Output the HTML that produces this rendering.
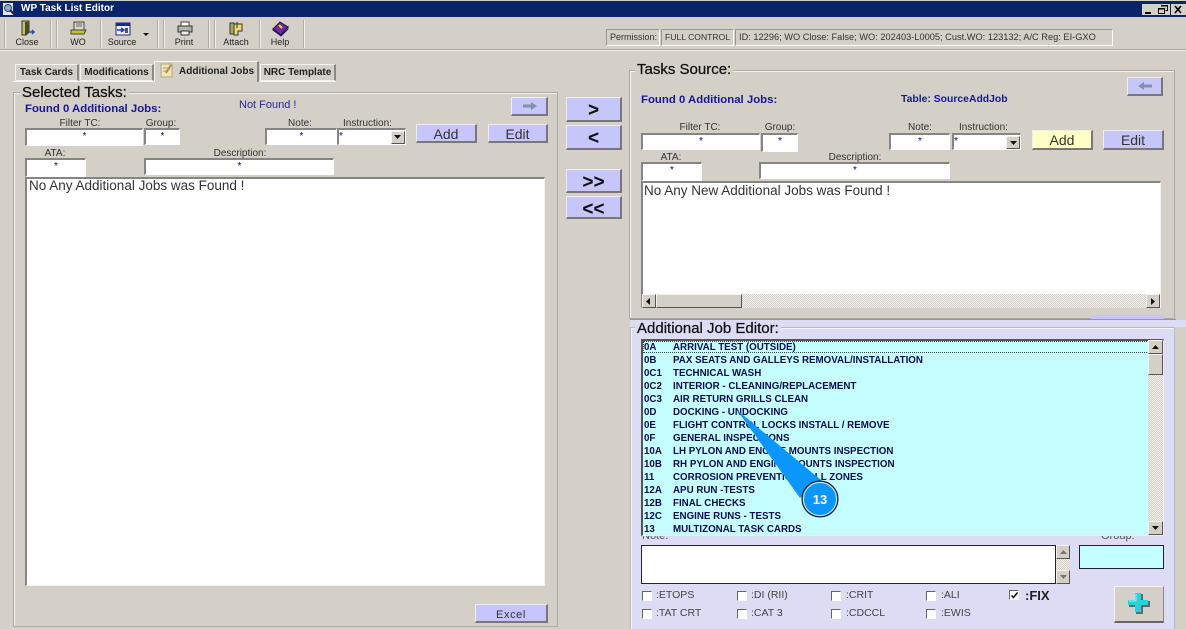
<!DOCTYPE html>
<html><head><meta charset="utf-8"><style>
html,body{margin:0;padding:0}
body{width:1186px;height:629px;overflow:hidden;background:#d4d0c8;position:relative;font-family:"Liberation Sans",sans-serif;color:#222}
div,span,svg{position:absolute;box-sizing:border-box}
.t{white-space:nowrap;line-height:1}
.c{text-align:center}
.inp{background:#fff;border:1px solid #fff;border-top:2px solid #858585;border-left:2px solid #858585;color:#006;font-size:10px;text-align:center;line-height:14px}
.btn{background:#c6c6fa;border:1px solid #eee;border-right:2px solid #777;border-bottom:2px solid #777;text-align:center;color:#333;font-size:14px;line-height:18px;font-weight:normal}
.big{font-weight:bold;font-size:19px;line-height:25px;color:#111}
.grp{border:1px solid #aaa9a3;box-shadow:inset 1px 1px 0 #f4f3ef}
.leg{background:#d4d0c8;font-size:15px;color:#111;padding:0 2px;line-height:14px;white-space:nowrap;-webkit-text-stroke:.25px #111}
.tb{font-size:9px;color:#222;text-align:center;white-space:nowrap;line-height:10px}
.sep{width:2px;top:20px;height:28px;border-left:1px solid #b0ada5;border-right:1px solid #f0efeb}
.tab{background:#d4d0c8;border:1px solid #f5f4f0;border-right:2px solid #888;font-size:10px;font-weight:bold;color:#222;text-align:center;white-space:nowrap}
.lb{font-size:10px;color:#333;white-space:nowrap;line-height:10px}
.bl{font-size:11.4px;font-weight:bold;color:#16169a;white-space:nowrap;line-height:11px}
.row{left:644px;top:0;font-size:9.77px;font-weight:bold;color:#0c0c50;white-space:nowrap;line-height:13px;height:13px}
.row b{position:absolute;left:29px;top:0;font-weight:bold}
.cb{width:10px;height:10px;background:#fff;border:1px solid #fff;border-top:1px solid #666;border-left:1px solid #666}
.cl{font-size:10.5px;color:#444;white-space:nowrap;line-height:11px}
.dith{background:repeating-conic-gradient(#d4d0c8 0 25%,#f0efeb 0 50%) 0 0/2px 2px}
.sb{background:#d4d0c8;border:1px solid #f4f3ef;border-right:1px solid #555;border-bottom:1px solid #555}
.st{border:1px solid #fff;border-top-color:#999;border-left-color:#999;line-height:15px;padding-left:3px;color:#333;top:29px;height:17px;white-space:nowrap}
.wb{top:4px;height:11px;width:14px;background:#d4d0c8}
</style></head><body>

<!-- title bar -->
<div style="left:0;top:1px;width:1186px;height:16px;background:#0a246a"></div>
<svg style="left:2px;top:2px" width="14" height="14" viewBox="0 0 14 14"><path d="M1 1h10v12H1z" fill="#e4e8ee"/><circle cx="6" cy="6" r="3.500" fill="#7fb0d8" stroke="#345"/><path d="M8 8l5 5" stroke="#224" stroke-width="2"/></svg>
<div class="t" style="left:21px;top:4px;font-size:10px;font-weight:bold;color:#fff">WP Task List Editor</div>
<div class="wb" style="left:1142px"></div>
<svg style="left:1142px;top:4px" width="14" height="11"><path d="M3 8h6v2H3z" fill="#000"/></svg>
<div class="wb" style="left:1156px"></div>
<svg style="left:1156px;top:4px" width="14" height="11"><path d="M5.500 1.500h6v5h-2M2.500 4.500h6v5h-6z" fill="none" stroke="#000"/><path d="M5 1h7v1.500H5zM2 4h7v1.500H2z" fill="#000"/></svg>
<div class="wb" style="left:1171px;width:15px"></div>
<svg style="left:1171px;top:4px" width="15" height="11"><path d="M4 2l6 7M10 2l-6 7" stroke="#000" stroke-width="1.700"/></svg>

<!-- toolbar -->
<div style="left:0;top:49px;width:1186px;height:2px;border-top:1px solid #a8a59d;border-bottom:1px solid #f0efeb"></div>
<div class="sep" style="left:4px"></div>
<div class="sep" style="left:50px"></div><div class="sep" style="left:56px"></div>
<div class="sep" style="left:100px"></div>
<div class="sep" style="left:157px"></div><div class="sep" style="left:163px"></div>
<div class="sep" style="left:208px"></div><div class="sep" style="left:214px"></div>
<div class="sep" style="left:259px"></div><div class="sep" style="left:303px"></div>

<svg style="left:20px;top:20px" width="16" height="17" viewBox="0 0 16 17"><path d="M2 1h7v11l-3 3H2z" fill="#c8c060" stroke="#333"/><path d="M5 2h4v10l-4 3z" fill="#4a4a24"/><path d="M9 12h5m-2-2 2 2-2 2" stroke="#2a4cb0" fill="none" stroke-width="1.500"/></svg>
<svg style="left:70px;top:21px" width="17" height="15" viewBox="0 0 17 15"><path d="M4 1h10v8H4z" fill="#d8d8d0" stroke="#444"/><path d="M6 3h6M6 5h6" stroke="#666"/><path d="M1 9h15l-2 4H1z" fill="#c8c030" stroke="#444"/></svg>
<svg style="left:115px;top:22px" width="16" height="14" viewBox="0 0 16 14"><path d="M1 1h14v12H1z" fill="#eef1f8" stroke="#1a2a80"/><path d="M1 1h14v3H1z" fill="#1a2a80"/><path d="M2 8h6m-2-2 3 2-3 2" stroke="#1838c0" fill="none" stroke-width="1.500"/><path d="M10 6h3v5h-3z" fill="#555"/></svg>
<svg style="left:143px;top:33px" width="6" height="3" viewBox="0 0 6 3"><path d="M0 0h6L3 3z" fill="#111"/></svg>
<svg style="left:177px;top:21px" width="16" height="15" viewBox="0 0 16 15"><path d="M4 1h8v4H4z" fill="#fff" stroke="#444"/><path d="M1 5h14v6H1z" fill="#b4b4b0" stroke="#333"/><path d="M4 10h8v4H4z" fill="#eee" stroke="#333"/></svg>
<svg style="left:229px;top:21px" width="14" height="16" viewBox="0 0 14 16"><path d="M1 2h4v11H1z" fill="#a8a860" stroke="#333"/><path d="M5 3h8v7H9v4H5z" fill="#e8dc70" stroke="#333"/><path d="M8 1v6" stroke="#333"/></svg>
<svg style="left:272px;top:21px" width="17" height="16" viewBox="0 0 17 16"><path d="M8 1l8 5-7 8-8-6z" fill="#6a2aa0" stroke="#2a1050"/><path d="M1 8l8 6 7-8v2l-7 7-8-6z" fill="#d8d8e8" stroke="#2a1050"/><path d="M7 4l3 3" stroke="#f4d040" stroke-width="2"/></svg>

<div class="tb" style="left:12px;top:37px;width:30px">Close</div>
<div class="tb" style="left:63px;top:37px;width:30px">WO</div>
<div class="tb" style="left:107px;top:37px;width:30px">Source</div>
<div class="tb" style="left:169px;top:37px;width:30px">Print</div>
<div class="tb" style="left:221px;top:37px;width:30px">Attach</div>
<div class="tb" style="left:265px;top:37px;width:30px">Help</div>

<!-- status -->
<div class="st" style="left:606px;width:54px;font-size:9px">Permission:</div>
<div class="st" style="left:661px;width:73px;font-size:8.600px">FULL CONTROL</div>
<div class="st" style="left:735px;width:378px;font-size:9.250px">ID: 12296; WO Close: False; WO: 202403-L0005; Cust.WO: 123132; A/C Reg: EI-GXO</div>

<!-- tabs -->
<div style="left:13px;top:81px;width:323px;height:1px;background:#f5f4f0"></div>
<div class="tab" style="left:15px;top:64px;width:64px;height:17px;line-height:16px">Task Cards</div>
<div class="tab" style="left:80px;top:64px;width:74px;height:17px;line-height:16px">Modifications</div>
<div class="tab" style="left:154px;top:61px;width:105px;height:21px;line-height:20px;border-bottom:0;text-align:left;padding-left:24px">Additional Jobs</div>
<svg style="left:160px;top:63px" width="14" height="15" viewBox="0 0 14 15"><path d="M1 1h11v13H1z" fill="#f0e4b8" stroke="#b0a880"/><path d="M3 5h5M3 8h4" stroke="#999"/><path d="M11 2 6 10" stroke="#b88a30" stroke-width="2"/></svg>
<div class="tab" style="left:260px;top:64px;width:76px;height:17px;line-height:16px">NRC Template</div>

<!-- Selected Tasks -->
<div class="grp" style="left:13px;top:92px;width:545px;height:535px"></div>
<div class="leg" style="left:20px;top:86px">Selected Tasks:</div>
<div class="bl" style="left:25px;top:104px">Found 0 Additional Jobs:</div>
<div class="t" style="left:239px;top:100px;font-size:11px;color:#28289a">Not Found !</div>
<div class="btn" style="left:511px;top:97px;width:37px;height:19px"></div>
<svg style="left:522px;top:101px" width="16" height="10" viewBox="0 0 16 10"><path d="M1 3.500h8V1l6 4-6 4V6.500H1z" fill="#7f93a8"/></svg>

<div class="lb c" style="left:40px;top:119px;width:80px">Filter TC:</div>
<div class="lb c" style="left:136px;top:119px;width:50px">Group:</div>
<div class="lb c" style="left:265px;top:119px;width:70px">Note:</div>
<div class="lb" style="left:343px;top:119px">Instruction:</div>
<div class="inp" style="left:25px;top:128px;width:118px;height:18px">*</div>
<div class="inp" style="left:144px;top:128px;width:36px;height:17px">*</div>
<div class="inp" style="left:265px;top:128px;width:72px;height:17px">*</div>
<div class="inp" style="left:337px;top:128px;width:69px;height:17px;text-align:left">*</div>
<div class="sb" style="left:391px;top:131px;width:14px;height:13px"></div>
<svg style="left:394px;top:135px" width="7" height="4"><path d="M0 0h7L3.500 4z" fill="#111"/></svg>
<div class="btn" style="left:416px;top:124px;width:61px;height:19px">Add</div>
<div class="btn" style="left:488px;top:124px;width:60px;height:19px">Edit</div>

<div class="lb c" style="left:25px;top:149px;width:60px">ATA:</div>
<div class="lb c" style="left:190px;top:149px;width:100px">Description:</div>
<div class="inp" style="left:25px;top:158px;width:61px;height:19px">*</div>
<div class="inp" style="left:144px;top:158px;width:190px;height:17px">*</div>
<div style="left:25px;top:177px;width:520px;height:409px;background:#fff;border-top:2px solid #858585;border-left:2px solid #858585;border-right:1px solid #f4f3ef;border-bottom:1px solid #f4f3ef"></div>
<div class="t" style="left:29px;top:179px;font-size:13.500px;color:#333">No Any Additional Jobs was Found !</div>
<div class="btn" style="left:475px;top:604px;width:73px;height:19px;font-size:11px;letter-spacing:.6px;line-height:20px">Excel</div>

<!-- middle -->
<div class="btn big" style="left:566px;top:97px;width:56px;height:25px">&gt;</div>
<div class="btn big" style="left:566px;top:125px;width:56px;height:25px">&lt;</div>
<div class="btn big" style="left:566px;top:169px;width:56px;height:24px">&gt;&gt;</div>
<div class="btn big" style="left:566px;top:196px;width:56px;height:23px">&lt;&lt;</div>

<!-- Tasks Source -->
<div class="grp" style="left:629px;top:70px;width:546px;height:249px"></div>
<div class="leg" style="left:635px;top:63px">Tasks Source:</div>
<div class="bl" style="left:641px;top:95px">Found 0 Additional Jobs:</div>
<div class="t" style="left:901px;top:95px;font-size:10.400px;font-weight:bold;color:#16169a">Table: SourceAddJob</div>
<div class="btn" style="left:1127px;top:77px;width:36px;height:19px"></div>
<svg style="left:1137px;top:81px" width="16" height="10" viewBox="0 0 16 10"><path d="M15 3.500H7V1L1 5l6 4V6.500h8z" fill="#7f93a8"/></svg>

<div class="lb c" style="left:660px;top:123px;width:80px">Filter TC:</div>
<div class="lb c" style="left:755px;top:123px;width:50px">Group:</div>
<div class="lb c" style="left:885px;top:123px;width:70px">Note:</div>
<div class="lb" style="left:959px;top:123px">Instruction:</div>
<div class="inp" style="left:641px;top:133px;width:119px;height:17px">*</div>
<div class="inp" style="left:761px;top:133px;width:37px;height:19px">*</div>
<div class="inp" style="left:889px;top:133px;width:61px;height:17px">*</div>
<div class="inp" style="left:952px;top:133px;width:69px;height:17px;text-align:left">*</div>
<div class="sb" style="left:1006px;top:136px;width:14px;height:13px"></div>
<svg style="left:1010px;top:141px" width="7" height="4"><path d="M0 0h7L3.500 4z" fill="#111"/></svg>
<div class="btn" style="left:1032px;top:130px;width:61px;height:20px;background:#ffffc6">Add</div>
<div class="btn" style="left:1103px;top:130px;width:61px;height:20px">Edit</div>
<div class="lb c" style="left:641px;top:153px;width:60px">ATA:</div>
<div class="lb c" style="left:805px;top:153px;width:100px">Description:</div>
<div class="inp" style="left:641px;top:162px;width:61px;height:19px">*</div>
<div class="inp" style="left:759px;top:162px;width:191px;height:17px">*</div>
<div style="left:641px;top:181px;width:520px;height:127px;background:#fff;border-top:2px solid #858585;border-left:2px solid #858585;border-right:1px solid #f4f3ef;border-bottom:1px solid #f4f3ef"></div>
<div class="t" style="left:644px;top:184px;font-size:13.500px;color:#333">No Any New Additional Jobs was Found !</div>
<div class="dith" style="left:643px;top:294px;width:517px;height:14px"></div>
<div class="sb" style="left:642px;top:294px;width:14px;height:14px"></div>
<svg style="left:646px;top:298px" width="4" height="7"><path d="M4 0v7L0 3.500z" fill="#111"/></svg>
<div class="sb" style="left:656px;top:294px;width:86px;height:14px"></div>
<div class="sb" style="left:1146px;top:294px;width:14px;height:14px"></div>
<svg style="left:1151px;top:298px" width="4" height="7"><path d="M0 0v7l4-3.500z" fill="#111"/></svg>
<div style="left:1091px;top:315px;width:73px;height:5px;background:#c6c6fa"></div>

<!-- Additional Job Editor -->
<div style="left:630px;top:320px;width:545px;height:309px;background:#dcdcf4"></div>
<div style="left:630px;top:320px;width:556px;height:7px;background:#dcdcf4"></div>
<div style="left:630px;top:319px;width:546px;height:1px;background:#99968e"></div>
<div style="left:630px;top:327px;width:545px;height:302px;border:1px solid #b6b6cc;border-bottom:0;box-shadow:inset 1px 1px 0 #f6f6fc"></div>
<div class="leg" style="left:635px;top:322px;background:#dcdcf4">Additional Job Editor:</div>
<div style="left:641px;top:339px;width:523px;height:197px;background:#c4feff;border-top:2px solid #555;border-left:2px solid #555;border-right:1px solid #eee;border-bottom:1px solid #eee"></div>
<div style="left:643px;top:341px;width:506px;height:12px;border:1px dotted #444"></div>
<div style="left:643px;top:341px;width:505px;height:194px;overflow:hidden">
<div style="left:-643px;top:-341px;width:1186px;height:629px">
<div class="row" style="top:341px">0A<b>ARRIVAL TEST (OUTSIDE)</b></div>
<div class="row" style="top:354px">0B<b>PAX SEATS AND GALLEYS REMOVAL/INSTALLATION</b></div>
<div class="row" style="top:367px">0C1<b>TECHNICAL WASH</b></div>
<div class="row" style="top:380px">0C2<b>INTERIOR - CLEANING/REPLACEMENT</b></div>
<div class="row" style="top:393px">0C3<b>AIR RETURN GRILLS CLEAN</b></div>
<div class="row" style="top:406px">0D<b>DOCKING - UNDOCKING</b></div>
<div class="row" style="top:419px">0E<b>FLIGHT CONTROL LOCKS INSTALL / REMOVE</b></div>
<div class="row" style="top:432px">0F<b>GENERAL INSPECTIONS</b></div>
<div class="row" style="top:445px">10A<b>LH PYLON AND ENGINE MOUNTS INSPECTION</b></div>
<div class="row" style="top:458px">10B<b>RH PYLON AND ENGINE MOUNTS INSPECTION</b></div>
<div class="row" style="top:471px">11<b>CORROSION PREVENTION - ALL ZONES</b></div>
<div class="row" style="top:484px">12A<b>APU RUN -TESTS</b></div>
<div class="row" style="top:497px">12B<b>FINAL CHECKS</b></div>
<div class="row" style="top:510px">12C<b>ENGINE RUNS - TESTS</b></div>
<div class="row" style="top:523px">13<b>MULTIZONAL TASK CARDS</b></div>
</div></div>
<div class="dith" style="left:1148px;top:340px;width:15px;height:195px"></div>
<div class="sb" style="left:1148px;top:340px;width:15px;height:14px"></div>
<svg style="left:1152px;top:345px" width="7" height="4"><path d="M0 4h7L3.500 0z" fill="#111"/></svg>
<div class="sb" style="left:1148px;top:354px;width:15px;height:21px"></div>
<div class="sb" style="left:1148px;top:521px;width:15px;height:14px"></div>
<svg style="left:1152px;top:526px" width="7" height="4"><path d="M0 0h7L3.500 4z" fill="#111"/></svg>

<!-- callout -->
<svg style="left:730px;top:405px" width="120" height="120" viewBox="0 0 120 120"><path d="M7 5 92 76 70 93z" fill="#0b96fb"/><circle cx="90" cy="94" r="18" fill="#0b96fb" stroke="#111" stroke-width="1"/><circle cx="90" cy="94" r="16.500" fill="none" stroke="#e8e8e8" stroke-width="1"/><text x="90" y="99" font-family="Liberation Sans" font-size="13" font-weight="bold" fill="#fff" text-anchor="middle">13</text></svg>

<!-- Note/Group -->
<div style="left:642px;top:536px;height:6px;width:60px;overflow:hidden"><span class="t" style="left:0;top:-5px;font-size:11px;color:#555">Note:</span></div>
<div style="left:1101px;top:536px;height:6px;width:60px;overflow:hidden"><span class="t" style="left:0;top:-5px;font-size:11px;color:#555">Group:</span></div>
<div style="left:641px;top:545px;width:415px;height:39px;background:#fff;border:1px solid #223"></div>
<div class="dith" style="left:1056px;top:545px;width:14px;height:39px"></div>
<div class="sb" style="left:1056px;top:545px;width:14px;height:14px"></div>
<svg style="left:1060px;top:550px" width="7" height="4"><path d="M0 4h7L3.500 0z" fill="#777"/></svg>
<div class="sb" style="left:1056px;top:570px;width:14px;height:14px"></div>
<svg style="left:1060px;top:575px" width="7" height="4"><path d="M0 0h7L3.500 4z" fill="#777"/></svg>
<div style="left:1079px;top:545px;width:85px;height:24px;background:#c4feff;border:1px solid #223"></div>

<!-- checks -->
<div class="cb" style="left:642px;top:591px"></div><div class="cl" style="left:656px;top:590px">:ETOPS</div>
<div class="cb" style="left:737px;top:591px"></div><div class="cl" style="left:751px;top:590px">:DI (RII)</div>
<div class="cb" style="left:831px;top:591px"></div><div class="cl" style="left:846px;top:590px">:CRIT</div>
<div class="cb" style="left:926px;top:591px"></div><div class="cl" style="left:941px;top:590px">:ALI</div>
<div class="cb" style="left:1009px;top:590px"></div>
<svg style="left:1010px;top:591px" width="9" height="9" viewBox="0 0 9 9"><path d="M1.500 4.500l2 2 4-5" stroke="#111" stroke-width="1.500" fill="none"/></svg>
<div class="t" style="left:1025px;top:589px;font-size:13px;font-weight:bold;color:#222">:FIX</div>
<div class="cb" style="left:642px;top:609px"></div><div class="cl" style="left:656px;top:608px">:TAT CRT</div>
<div class="cb" style="left:737px;top:609px"></div><div class="cl" style="left:751px;top:608px">:CAT 3</div>
<div class="cb" style="left:831px;top:609px"></div><div class="cl" style="left:846px;top:608px">:CDCCL</div>
<div class="cb" style="left:926px;top:609px"></div><div class="cl" style="left:941px;top:608px">:EWIS</div>
<div style="left:1114px;top:586px;width:50px;height:37px;background:#d4d0c8;border:1px solid #f4f3ef;border-right:1px solid #888;border-bottom:2px solid #666"></div>
<svg style="left:1126px;top:592px" width="25" height="23" viewBox="0 0 25 23"><path d="M10 2h7v7h7v6h-7v7h-7v-7H3V9h7z" fill="#5a6a70"/><path d="M9 1h6v7h7v5h-7v7H9v-7H2V8h7z" fill="#2cd0dc"/><path d="M10 2v7H3" stroke="#a0f4f8" stroke-width="1" fill="none"/></svg>
</body></html>
